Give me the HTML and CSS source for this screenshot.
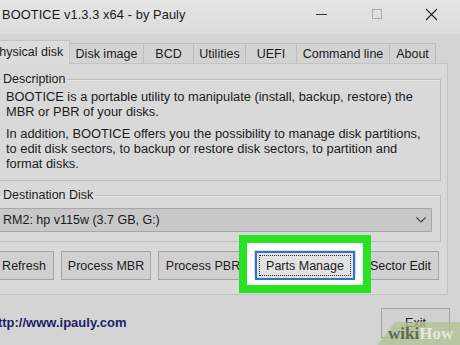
FILE: index.html
```html
<!DOCTYPE html>
<html>
<head>
<meta charset="utf-8">
<link rel="stylesheet" href="styles.css">
</head>
<body>
<div class="window">
  <div class="titlebar">
    <span class="title">BOOTICE v1.3.3 x64 - by Pauly</span>
    <div class="controls">
      <span class="ctl min"><svg width="12" height="12" viewBox="0 0 12 12"><line x1="0" y1="6.5" x2="11" y2="6.5" stroke="#333" stroke-width="1"/></svg></span>
      <span class="ctl max"><svg width="12" height="12" viewBox="0 0 12 12"><rect x="1.5" y="1.5" width="9" height="9" fill="none" stroke="#aaa" stroke-width="1"/></svg></span>
      <span class="ctl close"><svg width="13" height="13" viewBox="0 0 13 13"><path d="M1 1L12 12M12 1L1 12" stroke="#222" stroke-width="1.1"/></svg></span>
    </div>
  </div>
  <div class="tabs">
    <div class="tab active t1">Physical disk</div>
    <div class="tab t2">Disk image</div>
    <div class="tab t3">BCD</div>
    <div class="tab t4">Utilities</div>
    <div class="tab t5">UEFI</div>
    <div class="tab t6">Command line</div>
    <div class="tab t7">About</div>
  </div>
  <div class="panel">
    <fieldset class="group desc">
      <legend>Description</legend>
      <p>BOOTICE is a portable utility to manipulate (install, backup, restore) the<br>MBR or PBR of your disks.</p>
      <p>In addition, BOOTICE offers you the possibility to manage disk partitions,<br>to edit disk sectors, to backup or restore disk sectors, to partition and<br>format disks.</p>
    </fieldset>
    <fieldset class="group dest">
      <legend>Destination Disk</legend>
      <div class="combo">
        <span>RM2: hp v115w (3.7 GB, G:)</span>
        <svg width="12" height="8" viewBox="0 0 12 8"><path d="M1.5 1.5L6 6L10.5 1.5" fill="none" stroke="#444" stroke-width="1.2"/></svg>
      </div>
    </fieldset>
    <div class="buttons">
      <button class="btn b1">Refresh</button>
      <button class="btn b2">Process MBR</button>
      <button class="btn b3">Process PBR</button>
      <div class="hl-wrap">
        <button class="btn b4 focused"><span class="focus">Parts Manage</span></button>
        <span class="highlight"></span>
      </div>
      <button class="btn b5">Sector Edit</button>
    </div>
  </div>
  <div class="footer">
    <span class="link">http://www.ipauly.com</span>
    <button class="btn exit">Exit</button>
  </div>
  <div class="watermark"><span class="wiki">wiki</span><span class="how">How</span></div>
</div>
</body>
</html>
```
FILE: styles.css
```css
html, body {
  margin: 0;
  padding: 0;
  background: #d3d3d3;
  overflow: hidden;
}
body {
  width: 460px;
  height: 345px;
  font-family: "Liberation Sans", Arial, sans-serif;
  font-size: 12px;
  color: #1b1b1b;
}
.window {
  position: relative;
  margin-left: -12px;
  width: 484px;
  height: 345px;
  background: #d4d4d4;
  overflow: hidden;
}
.titlebar {
  height: 34px;
  display: flex;
  align-items: center;
  justify-content: space-between;
  padding-left: 14px;
  padding-bottom: 6px;
  box-sizing: border-box;
  background: linear-gradient(#e4e4e4, #dcdcdc);
}
.title {
  font-size: 12.8px;
  color: #1a1a1a;
  letter-spacing: 0.1px;
}
.controls {
  display: flex;
  margin-right: 13px;
}
.ctl {
  width: 55px;
  display: flex;
  justify-content: center;
}
.tabs {
  display: flex;
  align-items: flex-end;
  height: 23px;
  margin-top: 6px;
  padding-left: 0;
  position: relative;
  z-index: 2;
}
.tab {
  height: 20px;
  box-sizing: border-box;
  border: 1px solid #bdbdbd;
  border-bottom: none;
  border-left: none;
  background: #d3d3d3;
  display: flex;
  align-items: center;
  justify-content: center;
  font-size: 12.5px;
  padding-top: 1px;
}
.tab.active {
  background: #dcdcdc;
  border-left: 1px solid #c4c4c4;
  border-color: #c4c4c4;
  padding-top: 0;
  padding-bottom: 2px;
  padding-left: 2px;
  justify-content: flex-start;
  margin-bottom: -1px;
  height: 24px;
}
.t1 { width: 82px; }
.t2 { width: 74px; }
.t3 { width: 50px; }
.t4 { width: 52px; }
.t5 { width: 51px; }
.t6 { width: 93px; }
.t7 { width: 46px; }
.panel {
  margin: 0 24px 0 4px;
  height: 232px;
  box-sizing: border-box;
  border: 1px solid #c3c3c3;
  background: #d9d9d9;
  padding: 0 6px 0 2px;
  display: flex;
  flex-direction: column;
}
.group {
  margin: 0;
  min-width: 0;
  border: 1px solid #bcbcbc;
  box-shadow: inset 1px 1px 0 #e6e6e6;
  padding: 0 4px 0 10px;
}
.group legend {
  padding: 0 2px;
  margin-left: -5px;
  font-size: 12.5px;
  line-height: 14px;
}
.desc {
  margin-top: 8px;
  padding-top: 3px;
  padding-bottom: 9px;
}
.desc p {
  margin: 0;
  line-height: 15px;
  font-size: 12.85px;
  white-space: nowrap;
}
.desc p + p {
  margin-top: 7px;
}
.dest {
  margin-top: 7px;
  padding: 6px 8px 9px 3px;
}
.dest legend {
  margin-left: 2px;
}
.combo {
  height: 24px;
  box-sizing: border-box;
  border: 1px solid #a7a7a7;
  background: #c8c8c8;
  display: flex;
  align-items: center;
  justify-content: space-between;
  padding: 0 4px 0 3px;
  font-size: 12.5px;
}
.buttons {
  display: flex;
  gap: 7px;
  margin-top: 9px;
  margin-left: -1px;
}
.btn {
  height: 29px;
  box-sizing: border-box;
  border: 1px solid #a4a4a4;
  background: #d0d0d0;
  font-family: "Liberation Sans", Arial, sans-serif;
  font-size: 12.5px;
  color: #1b1b1b;
  padding: 0;
  margin: 0;
}
.b1 { width: 60px; }
.b2 { width: 90px; }
.b3 { width: 90px; }
.b4 { width: 100px; }
.b5 { width: 77px; }
.hl-wrap {
  position: relative;
  display: flex;
  z-index: 0;
  isolation: isolate;
}
.hl-wrap .btn { position: relative; z-index: 1; }
.btn.focused {
  border: 2px solid #2f75c4;
  background: #e2e2e2;
  padding: 2px;
}
.focus {
  display: flex;
  align-items: center;
  justify-content: center;
  height: 100%;
  box-sizing: border-box;
  border: 1px dotted #333;
}
.highlight {
  position: absolute;
  left: -16px;
  right: -16px;
  top: -16px;
  bottom: -13px;
  border: 8px solid #28e224;
  box-shadow: inset 0 0 0 7px #ffffff;
  pointer-events: none;
  z-index: -1;
}
.footer {
  display: flex;
  justify-content: space-between;
  align-items: flex-start;
  padding: 13px 22px 0 2px;
}
.link {
  font-weight: bold;
  color: #1e1d6a;
  font-size: 13px;
  margin-top: 7px;
}
.exit {
  width: 69px;
  height: 30px;
}
.watermark {
  position: absolute;
  left: 384px;
  top: 322px;
  width: 100px;
  height: 30px;
  background: rgba(175, 195, 145, 0.75);
  clip-path: polygon(23px 0, 100% 0, 100% 100%, 0 100%);
  padding-left: 16px;
  box-sizing: border-box;
  font-family: "Liberation Serif", serif;
  font-weight: bold;
  font-size: 17px;
  line-height: 24px;
  white-space: nowrap;
}
.wiki { color: #5f6a55; }
.how { color: #e3e8da; }
```
